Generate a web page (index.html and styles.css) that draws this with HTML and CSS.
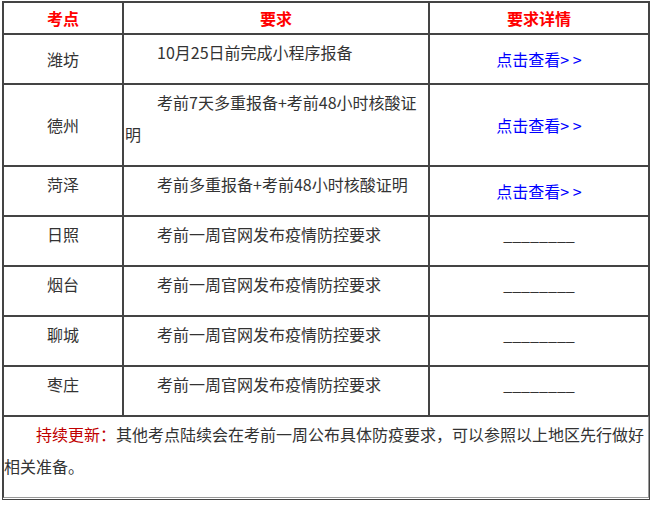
FILE: index.html
```html
<!DOCTYPE html>
<html lang="zh-CN">
<head>
<meta charset="utf-8">
<title>考点防疫要求</title>
<link rel="stylesheet" href="styles.css">
</head>
<body>
<table class="exam">
  <colgroup><col class="c1"><col class="c2"><col class="c3"></colgroup>
  <thead>
    <tr><th>考点</th><th>要求</th><th>要求详情</th></tr>
  </thead>
  <tbody>
    <tr>
      <td class="city mid">潍坊</td>
      <td class="req">10月25日前完成小程序报备</td>
      <td class="detail"><a href="#">点击查看&gt; &gt;</a></td>
    </tr>
    <tr>
      <td class="city mid">德州</td>
      <td class="req">考前7天多重报备+考前48小时核酸证明</td>
      <td class="detail"><a href="#">点击查看&gt; &gt;</a></td>
    </tr>
    <tr>
      <td class="city">菏泽</td>
      <td class="req">考前多重报备+考前48小时核酸证明</td>
      <td class="detail"><a href="#">点击查看&gt; &gt;</a></td>
    </tr>
    <tr>
      <td class="city">日照</td>
      <td class="req">考前一周官网发布疫情防控要求</td>
      <td class="blank">________</td>
    </tr>
    <tr>
      <td class="city">烟台</td>
      <td class="req">考前一周官网发布疫情防控要求</td>
      <td class="blank">________</td>
    </tr>
    <tr>
      <td class="city">聊城</td>
      <td class="req">考前一周官网发布疫情防控要求</td>
      <td class="blank">________</td>
    </tr>
    <tr>
      <td class="city">枣庄</td>
      <td class="req">考前一周官网发布疫情防控要求</td>
      <td class="blank">________</td>
    </tr>
  </tbody>
  <tfoot>
    <tr>
      <td class="note" colspan="3"><span class="note-label">持续更新：</span>其他考点陆续会在考前一周公布具体防疫要求，可以参照以上地区先行做好相关准备。</td>
    </tr>
  </tfoot>
</table>
</body>
</html>
```
FILE: styles.css
```css
body {
  margin: 0;
  background: #fff;
  font-family: "Noto Sans CJK SC", "Microsoft YaHei", sans-serif;
  font-size: 16px;
  color: #333;
}

.exam {
  margin: 1px 0 0 2px;
  width: 648px;
  table-layout: fixed;
  border-collapse: separate;
  border-spacing: 0;
  border: 1px solid #444;
  padding-bottom: 1px;
}

.c1 { width: 120px; }
.c2 { width: 306px; }
.c3 { width: 220px; }

.exam th,
.exam td {
  border: 1px solid #444;
  padding: 1px 1px 15px;
  line-height: 32px;
  vertical-align: top;
}

.exam th {
  padding: 0;
  line-height: 30px;
  color: #f00;
  font-weight: bold;
  vertical-align: middle;
}

.city { text-align: center; }

.exam td.mid {
  vertical-align: middle;
  padding-top: 8px;
  padding-bottom: 8px;
}

.req { text-indent: 2em; }

.exam td.detail {
  text-align: center;
  vertical-align: middle;
  padding-top: 8px;
  padding-bottom: 8px;
}

.detail a {
  color: #00f;
  text-decoration: none;
}

.blank { text-align: center; }

.exam td.note {
  padding: 1px 0 15px;
  text-indent: 2em;
  border-color: #444 #999 #999 #444;
}

.note-label { color: #c00000; }
```
